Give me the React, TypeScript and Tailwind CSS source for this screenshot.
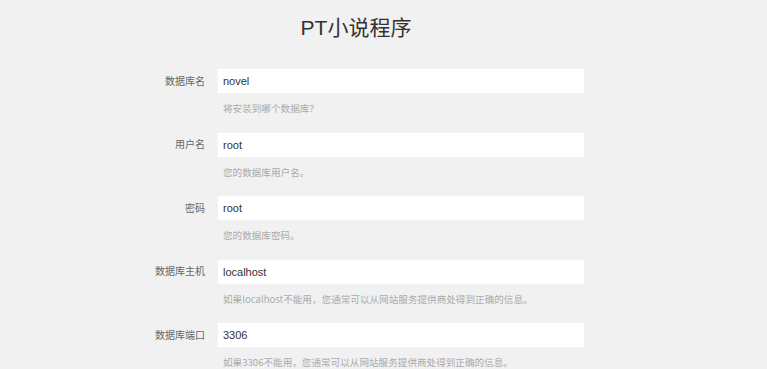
import React from 'react';

interface FieldProps {
  label: string;
  value: string;
  hint: string;
}

const Field = ({ label, value, hint }: FieldProps) => {
  return (
    <div className="flex items-start gap-3 h-[63.5px]">
      <label className="w-[205px] h-[26px] flex items-center justify-end text-[10px] text-[#666]">{label}</label>
      <div className="flex flex-col">
        <input
          readOnly
          value={value}
          className="w-[368px] h-[26px] bg-white px-[5px] text-[11px] text-[#333] outline-none border border-[#f3f3f3]"
        />
        <p className="mt-[7px] pl-[6px] text-[9.6px] leading-[14px] text-[#aaa] font-['Noto_Sans_CJK_SC',sans-serif]">
          {hint}
        </p>
      </div>
    </div>
  );
};

const fields: FieldProps[] = [
  { label: '数据库名', value: 'novel', hint: '将安装到哪个数据库？' },
  { label: '用户名', value: 'root', hint: '您的数据库用户名。' },
  { label: '密码', value: 'root', hint: '您的数据库密码。' },
  { label: '数据库主机', value: 'localhost', hint: '如果localhost不能用，您通常可以从网站服务提供商处得到正确的信息。' },
  { label: '数据库端口', value: '3306', hint: '如果3306不能用，您通常可以从网站服务提供商处得到正确的信息。' },
];

export default function App() {
  return (
    <div
      className="w-[767px] h-[369px] overflow-hidden bg-[#f1f1f1]"
      style={{ fontFamily: '"Liberation Sans", "Noto Sans CJK SC", sans-serif' }}
    >
      <h1 className="w-[712px] pt-[14px] text-center text-[21px] leading-[28px] text-[#333]">PT小说程序</h1>
      <form className="mt-[26px]">
        {fields.map((f) => (
          <Field key={f.label} {...f} />
        ))}
      </form>
    </div>
  );
}
